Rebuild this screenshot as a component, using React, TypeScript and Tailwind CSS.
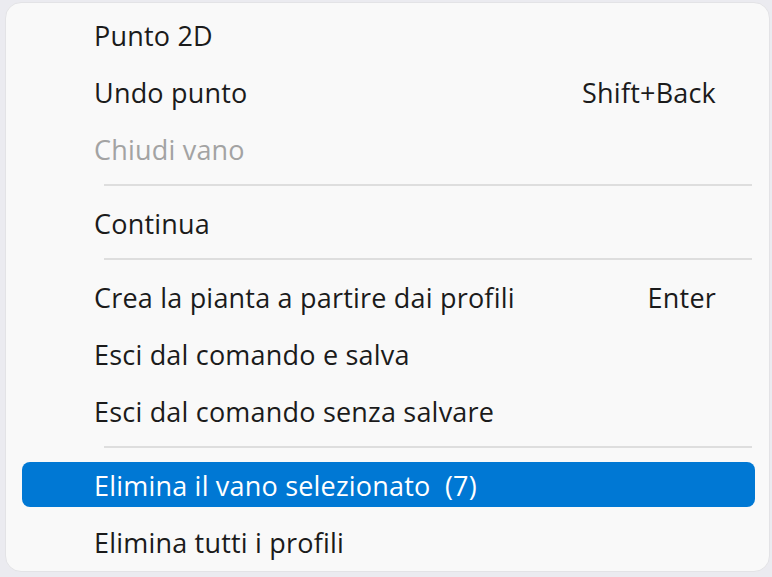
import React from "react";

type Item =
  | { kind: "item"; label: string; shortcut?: string; disabled?: boolean; active?: boolean }
  | { kind: "sep" };

const items: Item[] = [
  { kind: "item", label: "Punto 2D" },
  { kind: "item", label: "Undo punto", shortcut: "Shift+Back" },
  { kind: "item", label: "Chiudi vano", disabled: true },
  { kind: "sep" },
  { kind: "item", label: "Continua" },
  { kind: "sep" },
  { kind: "item", label: "Crea la pianta a partire dai profili", shortcut: "Enter" },
  { kind: "item", label: "Esci dal comando e salva" },
  { kind: "item", label: "Esci dal comando senza salvare" },
  { kind: "sep" },
  { kind: "item", label: "Elimina il vano selezionato  (7)", active: true },
  { kind: "item", label: "Elimina tutti i profili" },
];

export default function App() {
  return (
    <div className="w-[772px] h-[577px] bg-[#ebebf0] pl-[5px] pr-[2px] pt-[2px] pb-[5px] overflow-hidden">
      <div
        className="h-full w-full rounded-[16px] border border-[#e3e3e6] bg-[#f9f9f9] pt-[3px] pl-[16px] pr-[14px] flex flex-col"
        style={{ fontFamily: '"Open Sans", "Noto Sans", sans-serif' }}
      >
        {items.map((it, i) =>
          it.kind === "sep" ? (
            <div key={i} className="h-[17px] flex items-center pl-[82px] pr-[3px] pb-[2px]">
              <div className="h-[2px] w-full bg-[#dedede]" />
            </div>
          ) : (
            <div key={i} className="h-[57px] py-[6px]">
              <div
                className={
                  "h-full flex items-center justify-between pl-[72px] pr-[39px] pt-[3px] rounded-[8px] text-[27px] tracking-[0.2px] whitespace-pre " +
                  (it.active
                    ? "bg-[#0078d4] text-white"
                    : it.disabled
                    ? "text-[#a3a3a3]"
                    : "text-[#1b1b1b]")
                }
              >
                <span>{it.label}</span>
                {it.shortcut ? <span>{it.shortcut}</span> : null}
              </div>
            </div>
          )
        )}
      </div>
    </div>
  );
}
